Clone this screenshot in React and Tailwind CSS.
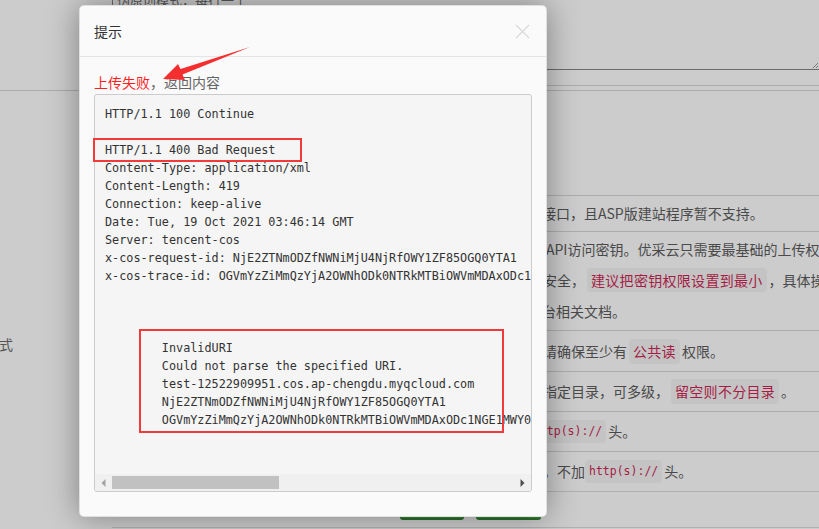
import React from "react";

const codeLines = [
  "HTTP/1.1 100 Continue",
  "",
  "HTTP/1.1 400 Bad Request",
  "Content-Type: application/xml",
  "Content-Length: 419",
  "Connection: keep-alive",
  "Date: Tue, 19 Oct 2021 03:46:14 GMT",
  "Server: tencent-cos",
  "x-cos-request-id: NjE2ZTNmODZfNWNiMjU4NjRfOWY1ZF85OGQ0YTA1",
  "x-cos-trace-id: OGVmYzZiMmQzYjA2OWNhODk0NTRkMTBiOWVmMDAxODc1NGE1MWY0ZjBkOWQ1",
  "",
  "",
  "",
  "        InvalidURI",
  "        Could not parse the specified URI.",
  "        test-12522909951.cos.ap-chengdu.myqcloud.com",
  "        NjE2ZTNmODZfNWNiMjU4NjRfOWY1ZF85OGQ0YTA1",
  "        OGVmYzZiMmQzYjA2OWNhODk0NTRkMTBiOWVmMDAxODc1NGE1MWY0ZjBkOWQ1",
  "",
  "",
];

function CodeCJK({ children }) {
  return (
    <span className="mx-[2px] rounded-[4px] bg-[#c4c4c4] px-[4px] py-[2px] text-[#a41d45] tracking-[0.3px]">
      {children}
    </span>
  );
}

function CodeMono({ children }) {
  return (
    <span className="mr-[2px] rounded-[4px] bg-[#c4c4c4] px-[4px] py-[3px] text-[11.5px] text-[#a41d45] [font-family:'DejaVu_Sans_Mono',monospace]">
      {children}
    </span>
  );
}

export default function App() {
  return (
    <div className="relative h-[529px] w-[819px] overflow-hidden bg-[#cccccc] text-[14px] text-[#4a4a4a] [font-family:'Noto_Sans_CJK_SC','Noto_Sans',sans-serif]">
      {/* background page */}
      <div className="flex flex-col">
        <div className="flex h-[70px]">
          <div className="w-[112px] shrink-0" />
          <div className="relative flex-1 border-b border-l border-[#6b6b6b]">
            <div className="-mt-[7px] whitespace-nowrap pl-[4px] text-[13px] leading-[14px] text-[#555]">
              伪原创模式，每行一个
            </div>
            <svg className="absolute bottom-[1px] right-[1px]" width="6" height="6" viewBox="0 0 6 6">
              <path d="M1 6 L6 1 M4 6 L6 4" stroke="#777" strokeWidth="1" />
            </svg>
          </div>
        </div>
        <div className="flex h-[16px]">
          <div className="w-[112px] shrink-0" />
          <div className="flex-1 border-b border-[#acacac]" />
        </div>
        <div className="h-[5px] border-b border-[#acacac]" />

        <div className="flex">
          <div className="w-[112px] shrink-0 pt-[243px]">
            <div className="flex w-[13px] justify-end whitespace-nowrap leading-[20px] text-[#555]">
              上传方式
            </div>
          </div>
          <div className="flex flex-1 flex-col whitespace-nowrap pt-[104px]">
            <div className="flex h-[36px] items-center border-t border-[#adadad] pl-[430px]">
              接口，且ASP版建站程序暂不支持。
            </div>
            <div className="flex h-[99px] flex-col border-t border-[#adadad] pt-[2px] leading-[31px]">
              <div className="pl-[434px]">API访问密钥。优采云只需要最基础的上传权限</div>
              <div className="pl-[431px]">
                安全，<CodeCJK>建议把密钥权限设置到最小</CodeCJK>，具体操作
              </div>
              <div className="pl-[430px]">台相关文档。</div>
            </div>
            <div className="flex h-[41px] items-center border-t border-[#adadad] pl-[431px]">
              请确保至少有<CodeCJK>公共读</CodeCJK>权限。
            </div>
            <div className="flex h-[40px] items-center border-t border-[#adadad] pl-[431px]">
              指定目录，可多级，<CodeCJK>留空则不分目录</CodeCJK>。
            </div>
            <div className="flex h-[40px] items-center border-t border-[#adadad] pl-[417px]">
              <CodeMono>http(s)://</CodeMono>头。
            </div>
            <div className="flex h-[40px] items-center border-t border-[#adadad] pl-[431px]">
              ，不加<CodeMono>http(s)://</CodeMono>头。
            </div>
            <div className="flex h-[37px] items-end gap-[12px] border-y border-[#b0b0b0] pb-[7px] pl-[288px]">
              <div className="h-[26px] w-[64px] rounded-[3px] border-b-2 border-[#2a6f2a] bg-[#3a863a]" />
              <div className="h-[26px] w-[65px] rounded-[3px] border-b-2 border-[#2a6f2a] bg-[#3a863a]" />
            </div>
          </div>
        </div>
      </div>

      {/* modal dialog */}
      <div className="absolute left-[79px] top-[5px] flex h-[512px] w-[468px] flex-col rounded-[5px] border border-black/10 bg-[#fafafa] shadow-[0_0_32px_rgba(0,0,0,0.38)]">
        <div className="flex h-[51px] shrink-0 items-center justify-between border-b border-[#e5e5e5] pl-[14px] pr-[16px]">
          <span className="text-[14px] text-[#333]">提示</span>
          <svg width="15" height="15" viewBox="0 0 15 15">
            <path d="M1 1 L14 14 M14 1 L1 14" stroke="#d9d9d9" strokeWidth="1.2" />
          </svg>
        </div>
        <div className="flex flex-col px-[14px] pt-[15px]">
          <div className="leading-[20px]">
            <span className="text-[#ff1f1f]">上传失败</span>
            <span className="text-[#666]">，返回内容</span>
          </div>
          <div className="mt-[2px] flex flex-col overflow-hidden rounded-[3px] border border-[#cccccc] bg-[#f5f5f5]">
            <div className="overflow-hidden px-[10px] py-[9.5px] text-[11.8px] leading-[18px] text-[#333] [font-family:'DejaVu_Sans_Mono',monospace]">
              {codeLines.map((l, i) => (
                <div key={i} className="h-[18px] whitespace-pre">
                  {l}
                </div>
              ))}
            </div>
            <div className="flex h-[17px] items-center bg-[#f0f0f0]">
              <div className="flex w-[17px] justify-center">
                <svg width="5" height="8" viewBox="0 0 5 8">
                  <path d="M4.5 0 L0.5 4 L4.5 8 Z" fill="#a3a3a3" />
                </svg>
              </div>
              <div className="flex flex-1 items-center">
                <div className="h-[13px] w-[167px] bg-[#c1c1c1]" />
              </div>
              <div className="flex w-[17px] justify-center">
                <svg width="5" height="8" viewBox="0 0 5 8">
                  <path d="M0.5 0 L4.5 4 L0.5 8 Z" fill="#505050" />
                </svg>
              </div>
            </div>
          </div>
        </div>
      </div>

      {/* annotations */}
      <div className="absolute left-[93px] top-[138px] h-[24px] w-[209px] border-2 border-[#f23a3a]" />
      <div className="absolute left-[139px] top-[329px] h-[104px] w-[365px] border-2 border-[#f23a3a]" />
      <svg className="absolute left-0 top-0" width="819" height="529" viewBox="0 0 819 529">
        <polygon
          points="163,79 178,64 180.5,69 250,47 182.5,74.5 185,80"
          fill="#f52f2f"
        />
      </svg>
    </div>
  );
}
